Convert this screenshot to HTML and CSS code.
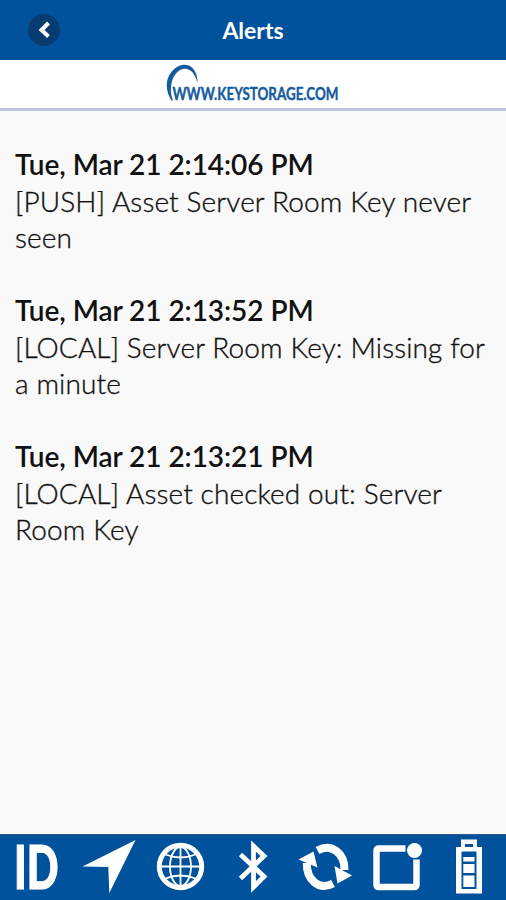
FILE: index.html
```html
<!DOCTYPE html>
<html lang="en">
<head>
<meta charset="utf-8">
<title>Alerts</title>
<link rel="stylesheet" href="styles.css">
</head>
<body>
<div class="app">
  <header class="topbar">
    <button class="back" aria-label="Back">
      <svg width="32" height="32" viewBox="0 0 32 32"><path d="M20.500 9 13.500 16 20.500 22.500"/></svg>
    </button>
    <h1 class="title">Alerts</h1>
  </header>
  <div class="brand">
    <svg class="logo" width="178" height="46" viewBox="164 62 178 46">
      <path d="M171.500 100.500C165.500 91 165 80 171 72.500C177.500 64 187 62.500 192.500 68C196 71.500 197.500 77 197.500 83C195.500 75.500 192.500 70.500 187 69C180 67.300 174.500 73.500 172 81C170.200 87.500 170.400 94 173 100.500Z"/>
      <text x="172.500" y="100.300" textLength="166" lengthAdjust="spacingAndGlyphs">WWW.KEYSTORAGE.COM</text>
    </svg>
  </div>
  <main class="alerts">
    <article class="alert"><h2>Tue, Mar 21 2:14:06 PM</h2><p>[PUSH] Asset Server Room Key never seen</p></article>
    <article class="alert"><h2>Tue, Mar 21 2:13:52 PM</h2><p>[LOCAL] Server Room Key: Missing for a minute</p></article>
    <article class="alert"><h2>Tue, Mar 21 2:13:21 PM</h2><p>[LOCAL] Asset checked out: Server Room Key</p></article>
  </main>
  <nav class="tabs">
    <svg viewBox="0 835 72 65"><text class="id" x="14" y="889" textLength="44.500" lengthAdjust="spacingAndGlyphs">ID</text></svg>
    <svg viewBox="72 835 72 65"><path d="M135.500 840 109.300 893 108.300 867 82.500 866.500Z"/></svg>
    <svg viewBox="144 835 72 65" class="line">
      <circle cx="180.500" cy="866.500" r="21.200" stroke-width="5"/>
      <g stroke-width="1.800"><ellipse cx="180.500" cy="866.500" rx="10.500" ry="19.500"/><path d="M180.500 846v41M160 866.500h41M165.500 854.500q15 6 30 0M165.500 878.500q15-6 30 0"/></g>
    </svg>
    <svg viewBox="216 835 72 65" class="line"><path stroke-width="4.800" d="M240.500 854.500 264 876.500 253.500 887V846L264 856 240.500 878.500"/></svg>
    <svg viewBox="288 835 72 65">
      <path class="arc" d="M317.500 850.500C332 842.500 345 854 344.500 870M333 883.500C319 891 306.500 880 306.800 863"/>
      <path d="M298.500 859.500 313.500 851.500 317.500 867.500ZM334.500 866 352 875.500 337.500 883.500Z"/>
    </svg>
    <svg viewBox="360 835 72 65">
      <path class="box" d="M405.500 848.500H379Q376.500 848.500 376.500 851V884.500Q376.500 887 379 887H414Q416.500 887 416.500 884.500V859.500"/>
      <circle cx="414.500" cy="850.500" r="7.500"/>
    </svg>
    <svg viewBox="432 835 72 65">
      <path fill-rule="evenodd" d="M461 839.500H477V847H482V893.500H456V847H461ZM465 844V847H473V844ZM461.500 851.500V889H476.500V851.500Z"/>
      <path d="M463.300 857H474.500V861.500H463.300ZM463.300 864H474.500V873H463.300ZM463.300 875.500H474.500V887H463.300Z"/>
    </svg>
  </nav>
</div>
</body>
</html>
```

FILE: styles.css
```css
* { box-sizing: border-box; margin: 0; padding: 0; }
body { font-family: Lato, sans-serif; background: #f9f9f9; color: #111; }
.app { display: flex; flex-direction: column; height: 900px; }
.topbar { display: grid; grid-template-columns: 90px 1fr 90px; align-items: center; height: 60px; background: #00529c; }
.back { justify-self: start; width: 32px; height: 32px; margin-left: 28px; border: 0; border-radius: 50%; background: #083c70; }
.back svg { display: block; fill: none; stroke: #fff; stroke-width: 4; }
.title { text-align: center; color: #fff; font-size: 23px; line-height: 30px; font-weight: 700; }
.brand { display: flex; justify-content: center; height: 51px; padding-top: 2px; background: #fff; border-bottom: 3px solid #c0c4d6; }
.logo { display: block; overflow: visible; fill: #165b9e; }
.logo text { font: 700 17.300px Lato, sans-serif; stroke: #165b9e; stroke-width: 0.400; }
.alerts { flex: 1; padding: 35px 15px 0; font-size: 28px; line-height: 36.500px; }
.alert { margin-bottom: 36.500px; }
.alert h2 { font-size: 28px; font-weight: 600; letter-spacing: -0.05px; }
.alert p { font-weight: 300; letter-spacing: 0.130px; -webkit-text-stroke: 0.350px #111; }
.tabs { display: flex; height: 66px; background: #00529c; border-top: 1px solid #2a578f; }
.tabs svg { width: 72px; height: 65px; overflow: visible; fill: #fff; }
.tabs .line { fill: none; stroke: #fff; }
.tabs .id { font: 900 60px Lato, sans-serif; stroke: #fff; stroke-width: 1.200; }
.arc { fill: none; stroke: #fff; stroke-width: 8; }
.box { fill: none; stroke: #fff; stroke-width: 6.500; }
```
